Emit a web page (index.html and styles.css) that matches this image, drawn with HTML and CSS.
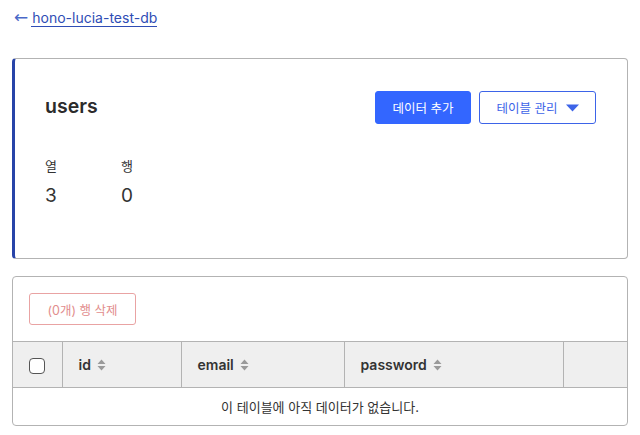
FILE: index.html
```html
<!DOCTYPE html>
<html lang="ko">
<head>
<meta charset="utf-8">
<link rel="stylesheet" href="styles.css">
</head>
<body>
<div class="page">
  <nav class="crumb">
    <span class="arrow">←</span><a class="back" href="#">hono-lucia-test-db</a>
  </nav>

  <section class="card info">
    <div class="info-head">
      <h1 class="title">users</h1>
      <div class="actions">
        <button class="btn btn-primary">데이터 추가</button>
        <button class="btn btn-outline">테이블 관리
          <svg class="caret" width="13" height="8" viewBox="0 0 13 8"><path d="M0 0.5h13L6.5 7.5z" fill="currentColor"/></svg>
        </button>
      </div>
    </div>
    <div class="stats">
      <div class="stat"><div class="stat-label">열</div><div class="stat-value">3</div></div>
      <div class="stat"><div class="stat-label">행</div><div class="stat-value">0</div></div>
    </div>
  </section>

  <section class="card data">
    <div class="toolbar">
      <button class="btn btn-danger" disabled>(0개) 행 삭제</button>
    </div>
    <table class="grid">
      <colgroup>
        <col class="c-check"><col class="c-id"><col class="c-email"><col class="c-pass"><col>
      </colgroup>
      <thead>
        <tr>
          <th class="check"><span class="box"></span></th>
          <th>id <span class="sort"><svg width="9" height="12" viewBox="0 0 9 12"><path d="M4.5 0.5L8.5 5H0.5z M4.5 11.5L0.5 7H8.5z" fill="currentColor"/></svg></span></th>
          <th>email <span class="sort"><svg width="9" height="12" viewBox="0 0 9 12"><path d="M4.5 0.5L8.5 5H0.5z M4.5 11.5L0.5 7H8.5z" fill="currentColor"/></svg></span></th>
          <th>password <span class="sort"><svg width="9" height="12" viewBox="0 0 9 12"><path d="M4.5 0.5L8.5 5H0.5z M4.5 11.5L0.5 7H8.5z" fill="currentColor"/></svg></span></th>
          <th class="last"></th>
        </tr>
      </thead>
      <tbody>
        <tr><td class="empty" colspan="5">이 테이블에 아직 데이터가 없습니다.</td></tr>
      </tbody>
    </table>
  </section>
</div>
</body>
</html>
```

FILE: styles.css
```css
* { box-sizing: border-box; }
html, body { margin: 0; padding: 0; background: #fff; }
body {
  font-family: Inter, "Noto Sans CJK KR", sans-serif;
  color: #333;
  font-size: 14px;
}
.page { padding: 0 12px; }

.crumb {
  display: flex;
  align-items: center;
  height: 35px;
  padding-left: 2px;
  font-size: 14px;
  color: #2f4db5;
}
.arrow { color: #4a68c8; margin-right: 3px; font-size: 17px; line-height: 17px; font-family: "DejaVu Sans", sans-serif; }
.back {
  color: #2f4db5;
  text-decoration: none;
  border-bottom: 1px solid #2f4db5;
  line-height: 17px;
  padding-left: 1px;
}

.card {
  border: 1px solid #b3b3b3;
  border-radius: 4px;
  background: #fff;
}
.info {
  margin-top: 23px;
  border-left: 3px solid #2844a8;
  padding: 32px 31px 38px 30px;
  height: 201px;
}
.info-head {
  display: flex;
  justify-content: space-between;
  align-items: center;
}
.title {
  margin: 0 0 3px;
  font-size: 19.5px;
  font-weight: 600;
  color: #2b2b2b;
  letter-spacing: 0;
}
.actions { display: flex; gap: 8px; }
.btn {
  font-family: Inter, "Noto Sans CJK KR", sans-serif;
  font-size: 12.5px;
  height: 33px;
  padding: 0;
  border-radius: 3px;
  display: inline-flex;
  align-items: center;
  gap: 6px;
  white-space: nowrap;
}
.btn-primary {
  background: #3366ff;
  border: 1px solid #3366ff;
  color: #fff;
  width: 96px;
  justify-content: center;
}
.btn-outline {
  background: #fff;
  border: 1px solid #3d64e8;
  color: #3d64e8;
  width: 117px;
  justify-content: center;
}
.caret { margin-left: 2px; }

.stats {
  display: grid;
  grid-template-columns: 76px 76px;
  margin-top: 33px;
}
.stat-label { font-size: 13px; color: #333; line-height: 18px; }
.stat-value { font-size: 19px; color: #333; margin-top: 9px; line-height: 23px; }

.data { margin-top: 17px; overflow: hidden; }
.toolbar { padding: 16px; }
.btn-danger {
  background: #fff;
  border: 1px solid #e9a3a3;
  color: #e28d8d;
  height: 32px;
  width: 107px;
  justify-content: center;
}

.grid {
  width: 100%;
  border-collapse: collapse;
  table-layout: fixed;
}
.c-check { width: 49px; }
.c-id { width: 119px; }
.c-email { width: 163px; }
.c-pass { width: 219px; }
.grid th {
  background: #efefef;
  height: 46px;
  border-top: 1px solid #b3b3b3;
  border-bottom: 1px solid #b3b3b3;
  border-left: 1px solid #b3b3b3;
  text-align: left;
  padding: 0 16px;
  font-size: 14px;
  font-weight: 600;
  color: #333;
}
.grid th:first-child { border-left: none; }
.grid th.check { padding: 0; text-align: center; }
.box {
  display: inline-block;
  width: 16px;
  height: 16px;
  border: 1px solid #555;
  border-radius: 4px;
  background: #fff;
  vertical-align: middle;
}
.sort { color: #9a9a9a; margin-left: 3px; vertical-align: -1px; }
.empty {
  text-align: center;
  font-size: 13px;
  color: #333;
  height: 37px;
  padding: 0;
}
```
